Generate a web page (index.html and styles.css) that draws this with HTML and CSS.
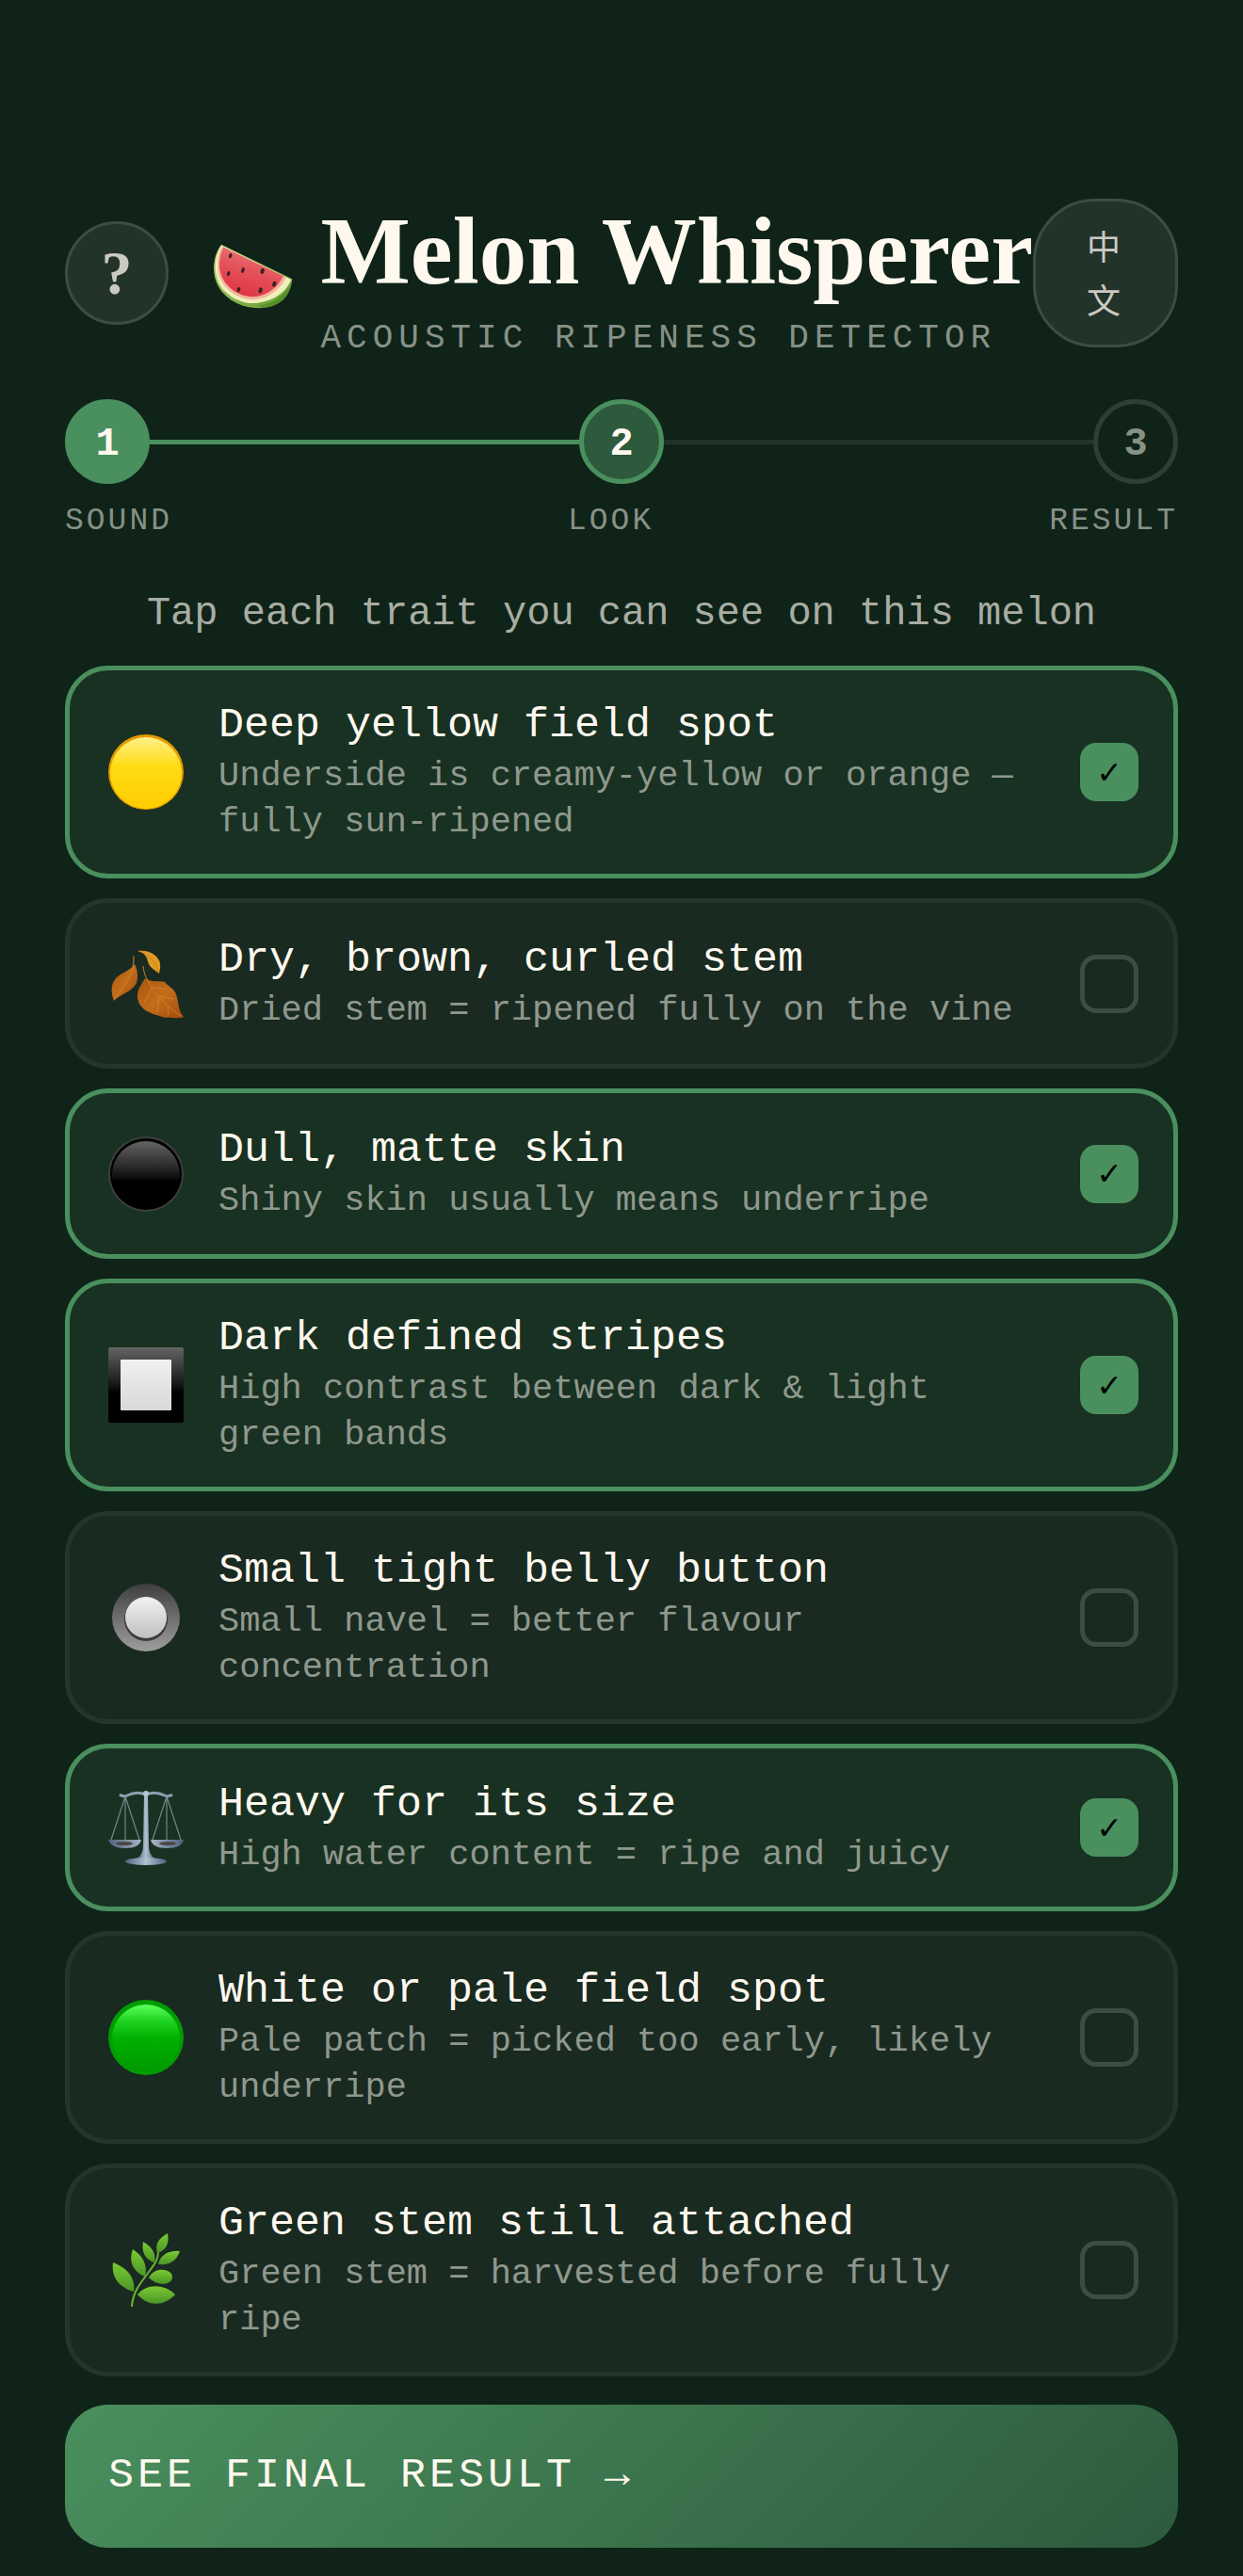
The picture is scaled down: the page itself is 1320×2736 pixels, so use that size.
FILE: index.html
```html
<!DOCTYPE html>
<html lang="en">
<head>
    <meta charset="UTF-8">
    <meta name="viewport" content="width=device-width, initial-scale=1.0">
    <title>Melon Whisperer</title>
    <link rel="stylesheet" href="styles.css">
</head>
<body>
    <header class="header">
        <button class="help-btn" type="button">?</button>
        <div class="brand">
            <svg class="brand-logo" viewBox="0 0 270 270" aria-hidden="true">
                <defs>
                    <linearGradient id="rind" x1="0" y1="0" x2="1" y2="1">
                        <stop offset="0" stop-color="#b9d27a"/>
                        <stop offset="1" stop-color="#5f9a2c"/>
                    </linearGradient>
                    <linearGradient id="flesh" x1="0.7" y1="0" x2="0.3" y2="1">
                        <stop offset="0" stop-color="#ee7f80"/>
                        <stop offset="0.5" stop-color="#e4515a"/>
                        <stop offset="1" stop-color="#de3440"/>
                    </linearGradient>
                </defs>
                <path fill="url(#rind)" d="M36 44C6 84 2 150 38 195C70 232 115 248 160 247C222 244 256 212 262 154Z"/>
                <path fill="#3f7d1e" d="M150 238C205 236 235 205 258 172C250 220 215 243 168 245Z" opacity="0.5"/>
                <path fill="#f0f0bb" d="M37 47C12 84 8 146 42 188C74 222 118 236 152 230C205 224 242 196 259 156Z"/>
                <path fill="#f3b69a" d="M40 50C19 86 16 140 48 178C78 212 118 223 148 219C193 213 226 184 242 149Z"/>
                <path fill="url(#flesh)" d="M43 53C25 90 23 136 54 172C80 202 116 213 146 210C186 205 216 179 234 145Z"/>
                <g fill="#3a2020">
                    <ellipse cx="65" cy="80" rx="5" ry="8" transform="rotate(15 65 80)"/>
                    <ellipse cx="59" cy="137" rx="5" ry="8" transform="rotate(15 59 137)"/>
                    <ellipse cx="105" cy="126" rx="5" ry="9" transform="rotate(20 105 126)"/>
                    <ellipse cx="167" cy="129" rx="6" ry="9" transform="rotate(15 167 129)"/>
                    <ellipse cx="205" cy="170" rx="6" ry="9" transform="rotate(15 205 170)"/>
                    <ellipse cx="91" cy="188" rx="5" ry="8" transform="rotate(15 91 188)"/>
                    <ellipse cx="161" cy="190" rx="6" ry="9" transform="rotate(15 161 190)"/>
                </g>
            </svg>
            <div>
                <h1 class="brand-title">Melon Whisperer</h1>
                <p class="brand-subtitle">ACOUSTIC RIPENESS DETECTOR</p>
            </div>
        </div>
        <button class="lang-btn" type="button" lang="zh">中<br>文</button>
    </header>

    <main>
        <div class="steps">
            <div class="step done">1</div>
            <div class="step-line done"></div>
            <div class="step active">2</div>
            <div class="step-line"></div>
            <div class="step">3</div>
        </div>
        <div class="step-labels">
            <span>SOUND</span>
            <span>LOOK</span>
            <span>RESULT</span>
        </div>

        <p class="hint">Tap each trait you can see on this melon</p>

        <div class="traits">
            <label class="trait">
                <span class="trait-icon">
                    <svg viewBox="0 0 80 80" aria-hidden="true">
                        <defs>
                            <linearGradient id="yellow" x1="0" y1="0" x2="0" y2="1">
                                <stop offset="0" stop-color="#fff08a"/>
                                <stop offset="0.4" stop-color="#ffdc14"/>
                                <stop offset="1" stop-color="#ffcc00"/>
                            </linearGradient>
                        </defs>
                        <circle cx="40" cy="40" r="40" fill="#e59b00"/>
                        <circle cx="40" cy="41" r="38" fill="url(#yellow)"/>
                    </svg>
                </span>
                <span class="trait-text">
                    <span class="trait-name">Deep yellow field spot</span>
                    <span class="trait-desc">Underside is creamy-yellow or orange — fully sun-ripened</span>
                </span>
                <input class="trait-check" type="checkbox" checked>
            </label>

            <label class="trait">
                <span class="trait-icon">
                    <svg viewBox="0 0 80 80" aria-hidden="true">
                        <defs>
                            <linearGradient id="brown" x1="0" y1="0" x2="1" y2="1">
                                <stop offset="0" stop-color="#a8560f"/>
                                <stop offset="0.5" stop-color="#c26d1a"/>
                                <stop offset="1" stop-color="#a14a0c"/>
                            </linearGradient>
                        </defs>
                        <path fill="url(#brown)" d="M28 19C31 25 32 32 30 39C25 49 14 50 6 58C3 50 2 41 8 34C14 28 23 26 28 19Z"/>
                        <path fill="#e09a22" d="M32 5C42 4 50 8 54 15C56 20 55 24 54 29C49 25 43 22 42 16C41 11 38 7 32 5Z"/>
                        <path fill="url(#brown)" d="M39 34C47 39 53 36 60 38C64 43 70 45 72 51C75 59 74 68 80 75C75 78 67 75 61 76C51 73 41 71 35 64C30 58 30 50 33 44Z"/>
                        <g fill="none" stroke="#d0802a" stroke-width="1">
                            <path d="M27 10C28 28 18 42 7 56"/>
                            <path d="M37 21C38 38 56 60 77 74"/>
                            <path d="M45 43L62 46M52 53L70 56M46 45L38 60M54 56L52 70M63 64L64 73"/>
                            <path d="M32 5C44 9 50 16 53 27"/>
                        </g>
                    </svg>
                </span>
                <span class="trait-text">
                    <span class="trait-name">Dry, brown, curled stem</span>
                    <span class="trait-desc">Dried stem = ripened fully on the vine</span>
                </span>
                <input class="trait-check" type="checkbox">
            </label>

            <label class="trait">
                <span class="trait-icon">
                    <svg viewBox="0 0 80 80" aria-hidden="true">
                        <defs>
                            <linearGradient id="black" x1="0" y1="0" x2="0" y2="1">
                                <stop offset="0" stop-color="#646464"/>
                                <stop offset="0.45" stop-color="#1e1e1e"/>
                                <stop offset="0.6" stop-color="#000000"/>
                            </linearGradient>
                        </defs>
                        <circle cx="40" cy="40" r="39" fill="#000000" stroke="#3c3f3c" stroke-width="2"/>
                        <circle cx="40" cy="41" r="36" fill="url(#black)"/>
                    </svg>
                </span>
                <span class="trait-text">
                    <span class="trait-name">Dull, matte skin</span>
                    <span class="trait-desc">Shiny skin usually means underripe</span>
                </span>
                <input class="trait-check" type="checkbox" checked>
            </label>

            <label class="trait">
                <span class="trait-icon">
                    <svg viewBox="0 0 80 80" aria-hidden="true">
                        <defs>
                            <linearGradient id="pale" x1="0" y1="0" x2="0" y2="1">
                                <stop offset="0" stop-color="#f0f0f0"/>
                                <stop offset="1" stop-color="#d8d8d8"/>
                            </linearGradient>
                        </defs>
                        <rect width="80" height="80" rx="2" fill="url(#black)"/>
                        <rect x="13" y="13" width="54" height="54" rx="1" fill="url(#pale)"/>
                    </svg>
                </span>
                <span class="trait-text">
                    <span class="trait-name">Dark defined stripes</span>
                    <span class="trait-desc">High contrast between dark &amp; light green bands</span>
                </span>
                <input class="trait-check" type="checkbox" checked>
            </label>

            <label class="trait">
                <span class="trait-icon">
                    <svg viewBox="0 0 80 80" aria-hidden="true">
                        <defs>
                            <linearGradient id="ring" x1="0" y1="0" x2="0" y2="1">
                                <stop offset="0" stop-color="#3e3e3e"/>
                                <stop offset="1" stop-color="#9e9e9e"/>
                            </linearGradient>
                            <linearGradient id="knob" x1="0" y1="0" x2="0" y2="1">
                                <stop offset="0" stop-color="#f2f2f2"/>
                                <stop offset="1" stop-color="#c0c0c0"/>
                            </linearGradient>
                        </defs>
                        <circle cx="40" cy="40" r="36" fill="url(#ring)"/>
                        <circle cx="40" cy="42" r="23" fill="#3a3a3a"/>
                        <circle cx="40" cy="40" r="22" fill="url(#knob)"/>
                    </svg>
                </span>
                <span class="trait-text">
                    <span class="trait-name">Small tight belly button</span>
                    <span class="trait-desc">Small navel = better flavour concentration</span>
                </span>
                <input class="trait-check" type="checkbox">
            </label>

            <label class="trait">
                <span class="trait-icon scale">
                    <svg viewBox="0 0 80 80" aria-hidden="true">
                        <defs>
                            <linearGradient id="steel" x1="0" y1="0" x2="1" y2="0">
                                <stop offset="0" stop-color="#4d6280"/>
                                <stop offset="0.5" stop-color="#b3c0cf"/>
                                <stop offset="1" stop-color="#4d6280"/>
                            </linearGradient>
                        </defs>
                        <path fill="none" stroke="#71878a" stroke-width="1.2" d="M18 7L3 53M18 7V53M18 7L33 53M62 7L47 53M62 7V53M62 7L77 53"/>
                        <path fill="none" stroke="#8ba0b2" stroke-width="3" d="M12 5Q16 8 20 6Q30 1 40 5Q50 1 60 6Q64 8 68 5"/>
                        <path fill="url(#steel)" d="M38 4H42L43 60Q43 68 49 73H31Q37 68 37 60Z"/>
                        <circle cx="40" cy="4" r="3" fill="#b5c4d4"/>
                        <path fill="url(#steel)" d="M0 53H35Q33 62 18 62Q3 62 0 53ZM45 53H80Q78 62 62 62Q47 62 45 53Z"/>
                        <ellipse cx="17" cy="57" rx="9" ry="2" fill="#4c4742"/>
                        <ellipse cx="63" cy="57" rx="9" ry="2" fill="#4c4742"/>
                        <ellipse cx="40" cy="76" rx="22" ry="4" fill="url(#steel)"/>
                    </svg>
                </span>
                <span class="trait-text">
                    <span class="trait-name">Heavy for its size</span>
                    <span class="trait-desc">High water content = ripe and juicy</span>
                </span>
                <input class="trait-check" type="checkbox" checked>
            </label>

            <label class="trait">
                <span class="trait-icon">
                    <svg viewBox="0 0 80 80" aria-hidden="true">
                        <defs>
                            <linearGradient id="green" x1="0" y1="0" x2="0" y2="1">
                                <stop offset="0" stop-color="#5cff5c"/>
                                <stop offset="0.25" stop-color="#1fd21f"/>
                                <stop offset="0.5" stop-color="#00b000"/>
                                <stop offset="1" stop-color="#009800"/>
                            </linearGradient>
                        </defs>
                        <circle cx="40" cy="40" r="40" fill="#009d00"/>
                        <circle cx="40" cy="41" r="36" fill="url(#green)"/>
                    </svg>
                </span>
                <span class="trait-text">
                    <span class="trait-name">White or pale field spot</span>
                    <span class="trait-desc">Pale patch = picked too early, likely underripe</span>
                </span>
                <input class="trait-check" type="checkbox">
            </label>

            <label class="trait">
                <span class="trait-icon">
                    <svg viewBox="0 0 80 80" aria-hidden="true">
                        <defs>
                            <linearGradient id="leaf" x1="0" y1="0" x2="0" y2="1">
                                <stop offset="0" stop-color="#7ccb33"/>
                                <stop offset="1" stop-color="#4a9426"/>
                            </linearGradient>
                        </defs>
                        <path fill="none" stroke="#6fb135" stroke-width="2" d="M25 79C26 62 36 52 43 42C50 33 53 28 53 21"/>
                        <g fill="url(#leaf)">
                            <path d="M63 1C65 11 62 19 52 22C49 12 54 6 63 1Z"/>
                            <path d="M76 20C72 31 65 35 53 34C55 24 64 19 76 20Z"/>
                            <path d="M37 10C46 15 51 22 49 32C39 29 35 21 37 10Z"/>
                            <path d="M26 18C37 25 42 35 39 47C27 42 21 32 26 18Z"/>
                            <path d="M43 48C48 39 58 38 65 42C69 45 69 50 65 53C58 57 49 54 43 48Z"/>
                            <path d="M5 32C21 38 29 49 27 63C11 58 3 48 5 32Z"/>
                            <path d="M31 66C40 55 58 54 71 66C59 79 42 79 31 66Z"/>
                        </g>
                    </svg>
                </span>
                <span class="trait-text">
                    <span class="trait-name">Green stem still attached</span>
                    <span class="trait-desc">Green stem = harvested before fully ripe</span>
                </span>
                <input class="trait-check" type="checkbox">
            </label>
        </div>

        <button class="result-btn" type="button">SEE FINAL RESULT →</button>
    </main>
</body>
</html>
```
FILE: styles.css
```css
* {
    box-sizing: border-box;
}

body {
    margin: 0;
    padding: 201px 69px 30px;
    background-color: #0f2318;
    color: #fff8ee;
    font-family: "Liberation Mono", monospace;
}

/* header */

.header {
    display: flex;
    align-items: center;
    margin-bottom: 45px;
}

.help-btn,
.lang-btn {
    flex-shrink: 0;
    border: 3px solid #3b4e43;
    background-color: #22332a;
    color: #cbcac1;
    cursor: pointer;
}

.help-btn {
    width: 110px;
    height: 110px;
    padding: 0;
    border-radius: 50%;
    font-family: "Liberation Serif", serif;
    font-size: 66px;
    font-weight: bold;
}

.lang-btn {
    padding: 24px 58px 14px 54px;
    border-radius: 66px;
    font-family: "Liberation Mono", "Noto Sans CJK SC", monospace;
    font-size: 36px;
    line-height: 57px;
}

.brand {
    display: flex;
    align-items: center;
    gap: 27px;
    margin-left: auto;
}

.brand-logo {
    width: 90px;
    height: 90px;
    flex-shrink: 0;
}

.brand-title {
    margin: 0 0 8px;
    font-family: "Liberation Serif", serif;
    font-size: 101px;
    font-weight: bold;
    line-height: 132px;
    white-space: nowrap;
}

.brand-subtitle {
    margin: 0;
    color: #879186;
    font-size: 36px;
    letter-spacing: 6px;
    line-height: 38px;
    white-space: nowrap;
}

/* progress */

.steps {
    display: flex;
    align-items: center;
}

.step {
    display: flex;
    justify-content: center;
    align-items: center;
    width: 90px;
    height: 90px;
    padding-top: 5px;
    border: 5px solid #2d4035;
    border-radius: 50%;
    color: #879186;
    font-size: 42px;
    font-weight: bold;
}

.step.done {
    border-color: #4a8f5e;
    background-color: #4a8f5e;
    color: #fff8ee;
}

.step.active {
    border-color: #4a8f5e;
    background-color: #2d5a3d;
    color: #fff8ee;
}

.step-line {
    flex: 1;
    height: 5px;
    background-color: #21342a;
}

.step-line.done {
    background-color: #4a8f5e;
}

.step-labels {
    display: flex;
    justify-content: space-between;
    margin-top: 18px;
    color: #879186;
    font-size: 33px;
    letter-spacing: 3px;
    line-height: 44px;
}

.hint {
    margin: 48px 0 27px;
    color: #a8ada3;
    font-size: 42px;
    line-height: 56px;
    text-align: center;
}

/* trait cards */

.traits {
    display: flex;
    flex-direction: column;
    gap: 21px;
}

.trait {
    display: flex;
    align-items: center;
    gap: 32px;
    padding: 30px 37px 30px 36px;
    border: 5px solid #23362c;
    border-radius: 46px;
    background-color: #192a21;
    cursor: pointer;
}

.trait:has(:checked) {
    border-color: #4a8f5e;
    background-color: #183122;
}

.trait-icon {
    display: flex;
    justify-content: center;
    align-items: center;
    width: 90px;
    height: 111px;
    flex-shrink: 0;
}

.trait-icon.scale {
    height: 108px;
}

.trait-icon svg {
    width: 80px;
    height: 80px;
}

.trait-text {
    flex: 1;
}

.trait-name {
    display: block;
    font-size: 45px;
    line-height: 58px;
}

.trait-desc {
    display: block;
    color: #8f988d;
    font-size: 37px;
    line-height: 49px;
}

.trait-check {
    display: flex;
    justify-content: center;
    align-items: center;
    width: 62px;
    height: 62px;
    margin: 0;
    flex-shrink: 0;
    appearance: none;
    border: 5px solid #3b4e43;
    border-radius: 17px;
    cursor: pointer;
}

.trait-check:checked {
    border-color: #4a8f5e;
    background-color: #4a8f5e;
}

.trait-check:checked::before {
    content: "✓";
    color: #000;
    font-family: "DejaVu Sans", sans-serif;
    font-size: 33px;
    line-height: 1;
}

.result-btn {
    display: block;
    width: 100%;
    margin-top: 30px;
    padding: 46px;
    border: none;
    border-radius: 46px;
    background: linear-gradient(135deg, #4a8f5e, #2d5a3d);
    color: #fff8ee;
    font-family: inherit;
    font-size: 45px;
    letter-spacing: 4px;
    line-height: 60px;
    text-align: left;
    cursor: pointer;
}
```
